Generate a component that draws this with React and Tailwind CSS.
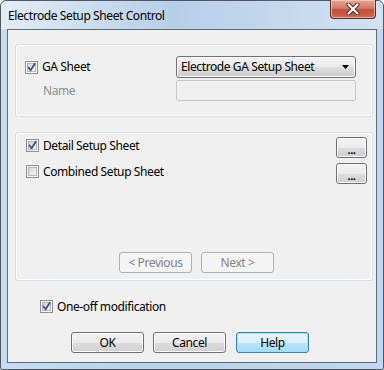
import React from "react";

const font = { fontFamily: '"Noto Sans", "Open Sans", sans-serif' };

function Check({ checked }) {
  return (
    <div className="relative w-[13px] h-[13px] shrink-0 border border-[#8e8f8f] bg-[#f4f4f4] p-px">
      <div className="w-full h-full border border-[#b3b7bd] bg-gradient-to-br from-[#d2d5da] to-[#f7f7f7]" />
      {checked && (
        <svg className="absolute left-0 top-0" width="11" height="11" viewBox="0 0 11 11">
          <path d="M2.5 5.5 L4.6 8.3 L8.8 1.8" fill="none" stroke="#3b4f8f" strokeWidth="1.8" strokeLinecap="round" strokeLinejoin="round" />
        </svg>
      )}
    </div>
  );
}

function Btn({ children, w = "w-[73px]", disabled, def, className = "" }) {
  if (disabled) {
    return (
      <div className={`${w} h-[21px] rounded-[3px] border border-[#adb2b5] bg-[#f4f4f4] flex items-center justify-center text-[12px] text-[#838383] ${className}`}>
        {children}
      </div>
    );
  }
  if (def) {
    return (
      <div className={`${w} h-[21px] rounded-[3px] border border-[#3c7fb1] shadow-[inset_0_0_0_1px_#9ee2fb] bg-[linear-gradient(#eaf6fd_0%,#d9f0fc_50%,#bee6fd_51%,#a7d9f5_100%)] flex items-center justify-center text-[12px] text-black ${className}`}>
        {children}
      </div>
    );
  }
  return (
    <div className={`${w} h-[21px] rounded-[3px] border border-[#707070] shadow-[inset_0_0_0_1px_#fcfcfc] bg-[linear-gradient(#f2f2f2_0%,#ebebeb_50%,#dddddd_51%,#cfcfcf_100%)] flex items-center justify-center text-[12px] text-black ${className}`}>
      {children}
    </div>
  );
}

export default function App() {
  return (
    <div className="w-[384px] h-[370px] tracking-[-0.4px]" style={font}>
      <div className="w-full h-full flex flex-col border border-[#4e5964] rounded-t-[6px] rounded-b-[2px] bg-[linear-gradient(90deg,#c9dcf0_0%,#b9d1ea_40%,#c3d8ee_100%)] px-[6px] pb-[6px]">
        <div className="h-[28px] flex justify-between items-start shrink-0 bg-[linear-gradient(90deg,#e4edf7_0%,#cfe0f1_20%,#b6cfe9_45%,#c8dbef_80%,#d2e2f2_100%)] -mx-[6px] px-[6px] rounded-t-[6px]">
          <span className="pl-[1px] pt-[7px] text-[12px] text-black leading-[15px]">Electrode Setup Sheet Control</span>
          <div className="mr-[1px] -mt-px w-[46px] h-[19px] rounded-b-[4px] border border-[#5a2a22] border-t-0 bg-[linear-gradient(#e9a597_0%,#d47b69_45%,#c24c37_55%,#cf6a52_100%)] shadow-[inset_0_0_0_1px_rgba(255,220,210,0.6)] flex items-center justify-center">
            <svg width="14" height="12" viewBox="0 0 14 12">
              <path d="M2.5 1.5 L11.5 10.5 M11.5 1.5 L2.5 10.5" stroke="#4a2620" strokeWidth="4" strokeLinecap="round" />
              <path d="M2.5 1.5 L11.5 10.5 M11.5 1.5 L2.5 10.5" stroke="#ffffff" strokeWidth="2.2" strokeLinecap="round" />
            </svg>
          </div>
        </div>
        <div className="flex-1 border border-[#5c6b79] bg-[#f0f0f0] flex flex-col pl-[7px] pr-[3px] pt-[14px] text-[12px] text-black">
          {/* Group 1 */}
          <div className="h-[73px] rounded-[3px] border border-[#d5dfe5] shadow-[inset_0_0_0_1px_#ffffff] pt-[11px] pl-[9px] flex flex-col">
            <div className="flex items-center h-[22px]">
              <div className="w-[151px] flex items-center gap-[4px]">
                <Check checked />
                <span>GA Sheet</span>
              </div>
              <div className="w-[180px] h-[22px] rounded-[3px] border border-[#707070] shadow-[inset_0_0_0_1px_#fcfcfc] bg-[linear-gradient(#f2f2f2_0%,#ebebeb_50%,#dddddd_51%,#cfcfcf_100%)] flex items-center justify-between pl-[4px] pr-[6px]">
                <span>Electrode GA Setup Sheet</span>
                <svg width="7" height="4" viewBox="0 0 7 4">
                  <path d="M0 0 H7 L3.5 4 Z" fill="#000" />
                </svg>
              </div>
            </div>
            <div className="flex items-center h-[21px] mt-[2px]">
              <span className="w-[151px] pl-[18px] text-[#8d8d8d]">Name</span>
              <div className="w-[180px] h-[21px] border border-[#c7c7c7] rounded-[2px] bg-[#f0f0f0]" />
            </div>
          </div>
          {/* Group 2 */}
          <div className="mt-[15px] h-[149px] rounded-[3px] border border-[#d5dfe5] shadow-[inset_0_0_0_1px_#ffffff] pt-[4px] pl-[10px] pr-[5px] flex flex-col">
            <div className="flex justify-between items-start h-[21px]">
              <div className="flex items-center gap-[4px] mt-[2px] h-[13px]">
                <Check checked />
                <span>Detail Setup Sheet</span>
              </div>
              <Btn w="w-[31px]"><span className="text-[11px] leading-none pt-[4px] font-bold tracking-[-0.5px]">...</span></Btn>
            </div>
            <div className="flex justify-between items-start h-[21px] mt-[5px]">
              <div className="flex items-center gap-[4px] mt-[2px] h-[13px]">
                <Check />
                <span>Combined Setup Sheet</span>
              </div>
              <Btn w="w-[31px]"><span className="text-[11px] leading-none pt-[4px] font-bold tracking-[-0.5px]">...</span></Btn>
            </div>
            <div className="flex gap-[9px] mt-[68px] pl-[93px]">
              <Btn disabled>&lt; Previous</Btn>
              <Btn disabled>Next &gt;</Btn>
            </div>
          </div>
          {/* One-off */}
          <div className="flex items-center gap-[4px] mt-[19px] pl-[25px] h-[13px]">
            <Check checked />
            <span>One-off modification</span>
          </div>
          <div className="flex gap-[9px] mt-[19px] pl-[56px]">
            <Btn>OK</Btn>
            <Btn className="mr-px">Cancel</Btn>
            <Btn def>Help</Btn>
          </div>
        </div>
      </div>
    </div>
  );
}
